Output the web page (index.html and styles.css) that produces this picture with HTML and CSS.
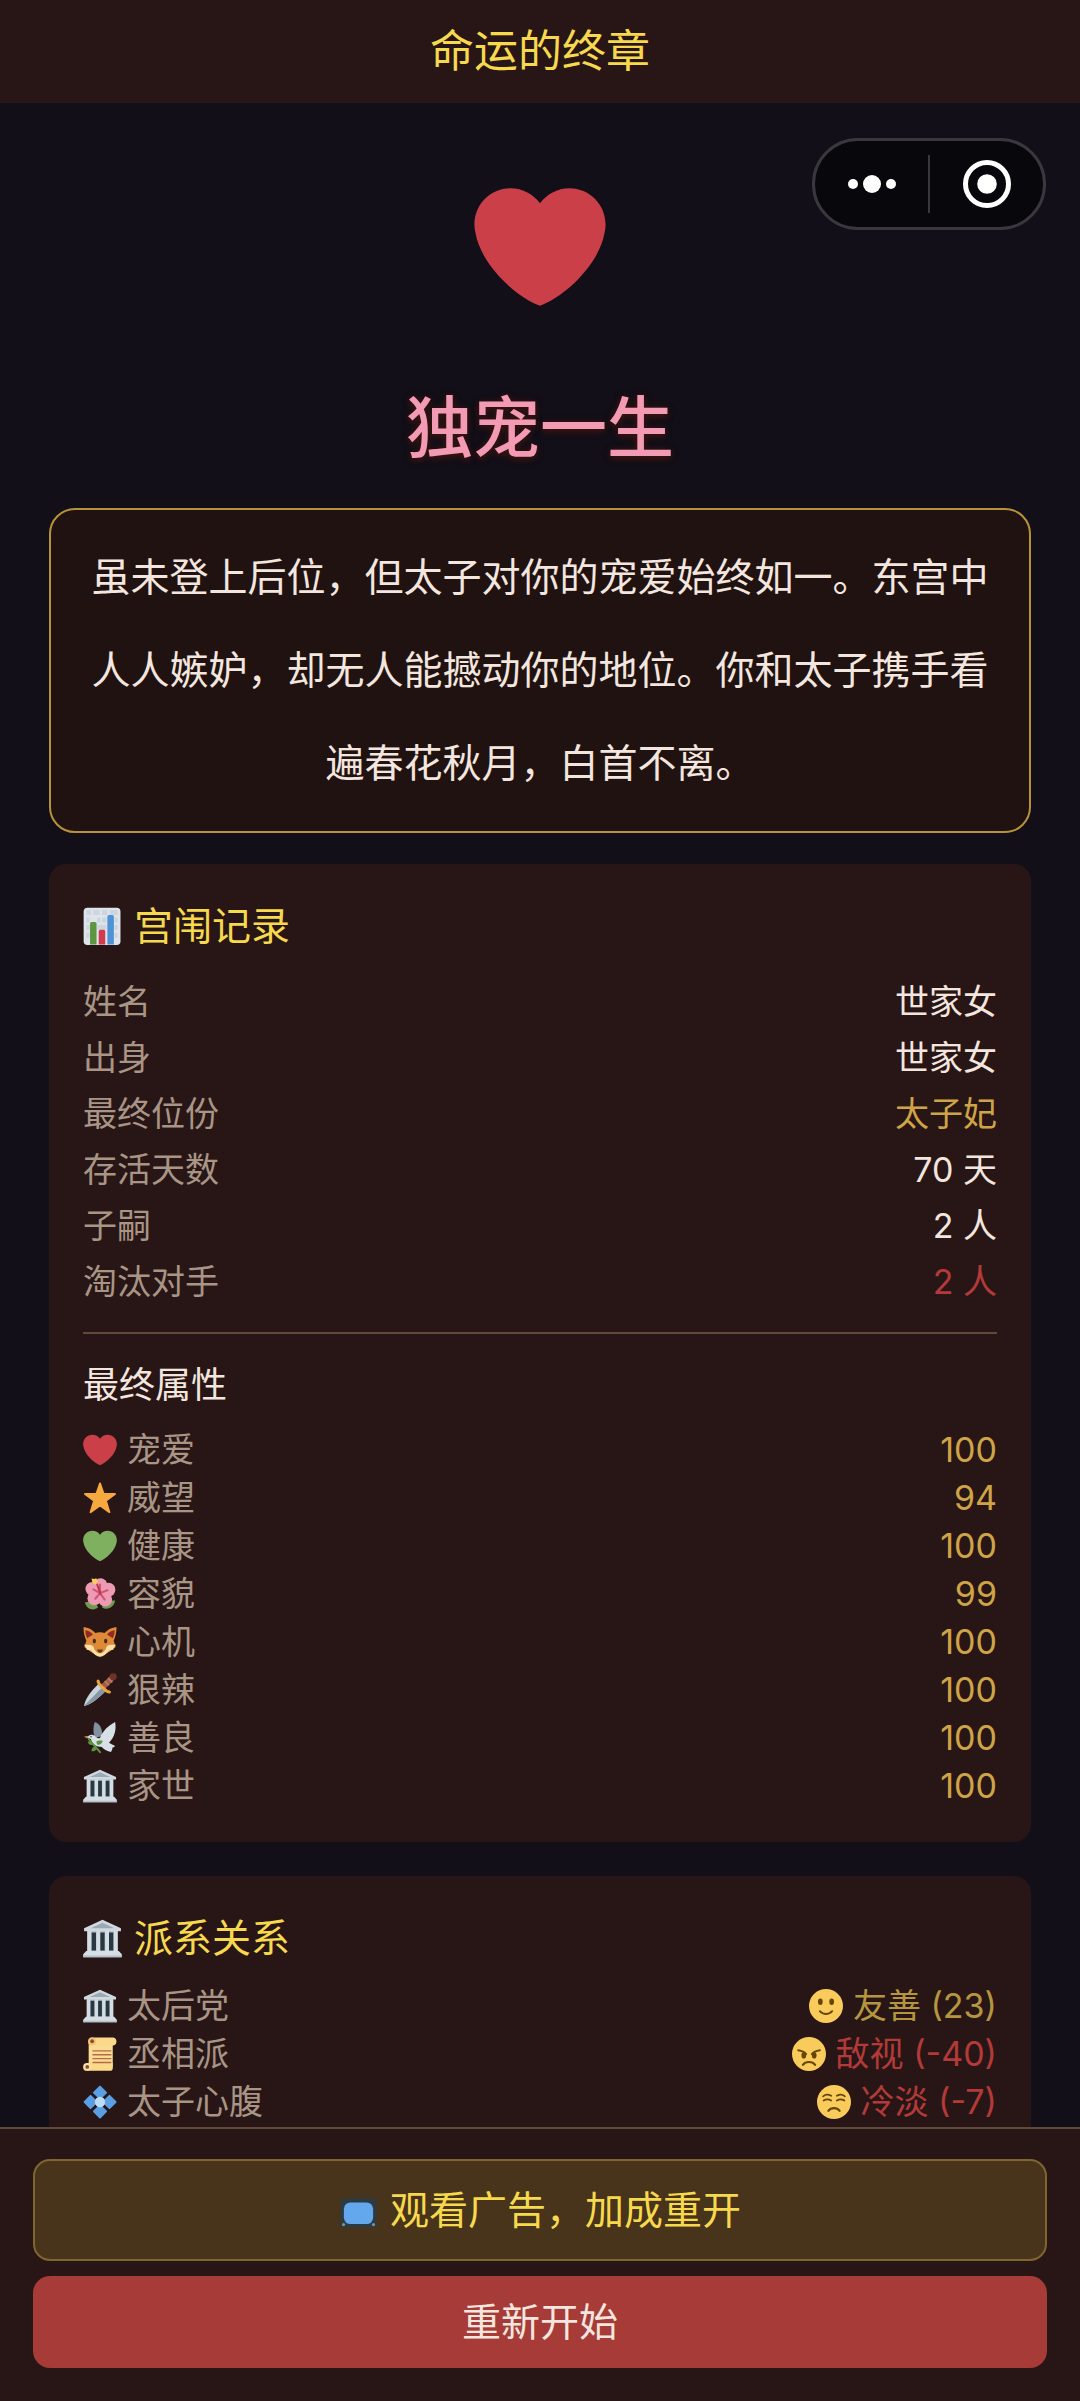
FILE: index.html
```html
<!DOCTYPE html>
<html lang="zh-CN">
<head>
<meta charset="utf-8">
<meta name="viewport" content="width=device-width, initial-scale=1">
<title>命运的终章</title>
<link rel="stylesheet" href="styles.css">
</head>
<body>
<svg class="sprite" aria-hidden="true">
  <symbol id="i-heart" viewBox="0 0 36 36"><path fill="currentColor" d="M35.885 11.833c0-5.45-4.418-9.868-9.867-9.868-3.308 0-6.227 1.633-8.018 4.129-1.791-2.496-4.71-4.129-8.017-4.129-5.45 0-9.868 4.417-9.868 9.868 0 .772.098 1.52.266 2.241C1.751 22.587 11.216 31.568 18 34.034c6.783-2.466 16.249-11.447 17.617-19.959.17-.721.268-1.469.268-2.242z"/></symbol>
  <symbol id="i-star" viewBox="0 0 36 36"><path fill="#f5a93f" stroke="#f5a93f" stroke-width="2" stroke-linejoin="round" d="M18 2.500 21.800 13.500 33.900 13.700 24.300 21 28 33 18 26 8 33 11.700 21 2.100 13.700 14.200 13.500z"/></symbol>
  <symbol id="i-chart" viewBox="0 0 36 36">
    <rect x=".6" y=".6" width="34" height="34.400" rx="3.500" fill="#dfe4ea"/>
    <path stroke="#cdd6df" stroke-width="4.600" d="M3 5h4.500M9.500 5h6M17.500 5h5M24.500 5h7.500M3 12h3M13 12h3M17.500 12h4M29 12h3M3 19h3M13 19h8.500M29 19h3M3 26h3M29 26h3"/>
    <path fill="#5c9740" d="M6.500 34.500V15.300q0-1.500 1.500-1.500h3q1.500 0 1.500 1.500v19.200z"/>
    <path fill="#d23a4e" d="M14.500 34.500V22.500q0-1.500 1.500-1.500h3q1.500 0 1.500 1.500v12z"/>
    <path fill="#4f93d6" d="M22.500 34.500V8.800q0-1.500 1.500-1.500h3q1.500 0 1.500 1.500v25.700z"/>
  </symbol>
  <symbol id="i-flower" viewBox="0 0 36 36">
    <path fill="#6f9c50" d="M2 27c5-2 12 0 14 5-4 4-12 3-14-5zM20 32c2-5 8-8 14-7-1 7-8 11-14 7z"/>
    <g fill="#ee9ab4"><circle cx="18.500" cy="8.500" r="7.300"/><circle cx="9.800" cy="12.500" r="7.300"/><circle cx="27" cy="13.500" r="7.300"/><circle cx="12" cy="22.500" r="7.300"/><circle cx="23.500" cy="24" r="7.300"/><circle cx="18" cy="17" r="6"/></g>
    <path stroke="#cf5776" stroke-width="2.200" stroke-linecap="round" d="M18 17V8M18 17l-7-4M18 17l8-3M18 17l-5 6M18 17l5 7"/>
    <path stroke="#c22f45" stroke-width="2" stroke-linecap="round" d="M18.500 18 15 8"/>
    <path fill="#f7cf57" d="M9 1.500l3 .5 2-.8 2 3.800-3 3-3-2z"/>
  </symbol>
  <symbol id="i-fox" viewBox="0 0 36 36">
    <path fill="#e08a38" d="M.5 2.500C5 2.500 10 5 13 8.500c3-1 7-1 10 0C26 5 31 2.500 35.500 2.500c0 5-1 10-3 14l2 7-7 5-9.500 5-9.500-5-7-5 2-7C1.500 12.500.5 7.500.5 2.500z"/>
    <path fill="#8e2b23" d="M2.500 5.500C6 6 9 8 10.500 10L4.500 14C3 11.500 2.500 9 2.500 5.500zM33.500 5.500C30 6 27 8 25.500 10l6 4c1.500-2.500 2-5 2-8.500z"/>
    <path fill="#fbe0a5" d="M1 21c4 0 8-1 10 2 1 3 3 7 7 7s6-4 7-7c2-3 6-2 10-2l-3 4 .5 1-5 1c-3 4-6 6.500-9.500 6.500s-6.500-2.500-9.500-6.500l-5-1 .5-1z"/>
    <ellipse cx="12" cy="17" rx="1.700" ry="2.500" fill="#3d2c20"/><ellipse cx="24" cy="17" rx="1.700" ry="2.500" fill="#3d2c20"/>
    <path fill="#5a3a24" d="M15 26h6c0 2-1.500 3.500-3 3.500s-3-1.500-3-3.500z"/>
  </symbol>
  <symbol id="i-dagger" viewBox="0 0 36 36">
    <path fill="#c9d3dc" d="M1 35C2.500 27 8 20 16.500 11.500l7.500 7.500C16 27 9 33 1 35z"/>
    <path fill="#8798a5" d="M1 35 20.500 15l3.500 4C16 27 9 33 1 35z"/>
    <path stroke="#a05c4a" stroke-width="6" d="M20 16 31 5"/>
    <path stroke="#c97b63" stroke-width="1.500" d="M23 8.500l4.500 4.500M26.500 5.500 31 10"/>
    <path fill="none" stroke="#eda33d" stroke-width="3.200" stroke-linecap="round" d="M16 8.500c0 3 3 5 5 7s4 4.500 7 4.500"/>
    <circle cx="32" cy="4" r="3.700" fill="#6e3327"/>
  </symbol>
  <symbol id="i-dove" viewBox="0 0 36 36">
    <path fill="#8291a0" d="M12.500 1c5 2 8 6 8 15l-8 2c-2-6-2-12 0-17z"/>
    <path fill="#d8e0e7" d="M34 1c1.500 8-.5 16-6.500 22l6.500 3.500c-1 1.500-2 1.700-3 1.700.5 1.500-.5 3-1.500 4.500-5-1-8-3.500-10-5.500-6 0-10-3-11-8l-4-2C6 14.500 10 13.500 12.500 16c1.500 1.500 3.500 3 5.500 2 3-8 9-13 16-17z"/>
    <path fill="#e0a23d" d="M1 16.500l5-.5-1.500 2.500z"/>
    <circle cx="8.500" cy="16.700" r=".8" fill="#29323a"/>
    <path fill="none" stroke="#5e9440" stroke-width="2" stroke-linecap="round" d="M6 19c2 4 7 7 12 14"/>
    <path fill="#5e9440" d="M5 22c3-1 5 0 6 3-3 1-5 0-6-3zM14 22c3-2 5-1 7-1-1 3-3 5-6 4zM12 27c-2 1-3 2-3 5 3 0 5-1 6-3z"/>
  </symbol>
  <symbol id="i-palace" viewBox="0 0 36 36">
    <path fill="#b4c0ca" d="M4 10h28v21H4z"/>
    <path fill="#d5dde4" d="M4 11h3.500v19H4zM12.500 11H16v19h-3.500zM20.500 11H24v19h-3.500zM28.500 11H32v19h-3.500z"/>
    <path fill="#283741" d="M8 12.500h4V29H8zM16 12.500h4V29h-4zM24 12.500h4V29h-4z"/>
    <path fill="#d0d9e0" d="M18 .8 35 8.500v2.700H1V8.500z"/>
    <path fill="#9ba9b5" d="M18 3.500 29 8.500H7z"/>
    <path fill="#d6dee4" d="M3 29.500h30l2.800 3v2.700H.2v-2.700z"/>
    <path fill="#b4c0ca" d="M.2 33.700h35.600v1.500H.2z"/>
  </symbol>
  <symbol id="i-scroll" viewBox="0 0 36 36">
    <path fill="#fadc92" d="M6 4h25.500v28H6z"/>
    <path fill="#fbd98a" d="M8 .5h24a4 4.300 0 0 1 0 8.500H10z"/>
    <circle cx="9.500" cy="4.700" r="4.200" fill="#f3c377"/><circle cx="9.700" cy="4.500" r="2" fill="#8a4b38"/>
    <path fill="#fbd98a" d="M4 27.500h27.500V33q0 2.700-3 2.700H4z"/>
    <circle cx="4.200" cy="31.700" r="4.100" fill="#fbe0a0"/><circle cx="4.500" cy="31.700" r="2" fill="#8a4b38"/>
    <path stroke="#b56a4c" stroke-width="1.500" d="M10 14.700h20M10 18.800h20M10 22.900h20M10 27h20"/>
  </symbol>
  <symbol id="i-diamond" viewBox="0 0 36 36">
    <g fill="#5a9fe3" stroke="#5a9fe3" stroke-width="2" stroke-linejoin="round"><path d="M18 1.700 24.500 8 18 14.500 11.500 8z"/><path d="M18 21.500 24.500 28 18 34.500 11.500 28z"/><path d="M8 11.500 14.500 18 8 24.500 1.700 18z"/><path d="M28 11.500 34.500 18 28 24.500 21.500 18z"/></g>
    <circle cx="18" cy="18" r="5.500" fill="#bddcf8"/>
  </symbol>
  <symbol id="i-smile" viewBox="0 0 36 36">
    <circle cx="18" cy="18" r="18" fill="#f8cb5b"/>
    <ellipse cx="12" cy="13.500" rx="2.500" ry="3.500" fill="#664500"/><ellipse cx="24" cy="13.500" rx="2.500" ry="3.500" fill="#664500"/>
    <path fill="none" stroke="#664500" stroke-width="2" stroke-linecap="round" d="M11.500 23.500c3.500 4 9.500 4 13 0"/>
  </symbol>
  <symbol id="i-angry" viewBox="0 0 36 36">
    <circle cx="18" cy="18" r="18" fill="#f8cb5b"/>
    <ellipse cx="12.500" cy="19.500" rx="2.500" ry="3.300" fill="#664500"/><ellipse cx="23.500" cy="19.500" rx="2.500" ry="3.300" fill="#664500"/>
    <path fill="none" stroke="#664500" stroke-width="2" stroke-linecap="round" d="M6.500 14c3 .5 6.500 1.500 8.500 4M29.500 14c-3 .5-6.500 1.500-8.500 4"/>
    <path fill="none" stroke="#664500" stroke-width="2.200" stroke-linecap="round" d="M11.500 29.500c3-4 10-4 13 0"/>
  </symbol>
  <symbol id="i-unamused" viewBox="0 0 36 36">
    <circle cx="18" cy="18" r="18" fill="#f8cb5b"/>
    <path fill="none" stroke="#664500" stroke-width="1.800" stroke-linecap="round" d="M6.500 12c2.500-2.200 5.500-2.200 8.500-.5M21 11.500c3-1.700 6-1.700 8.500.5M7 16.500c2.500-1.500 5.500-1.500 8 0M21 16.500c2.500-1.500 5.500-1.500 8 0"/>
    <path fill="none" stroke="#664500" stroke-width="2.200" stroke-linecap="round" d="M12 27.500c3-4 9-4 12 0"/>
  </symbol>
  <symbol id="i-tv" viewBox="0 0 36 36">
    <path stroke="#3a3a33" stroke-width="1.200" d="M18 7.500 12 .5M18 7.500l7-7"/>
    <rect x="1.500" y="7" width="33" height="26.500" rx="2" fill="#2c3a42"/>
    <rect x="4.500" y="10.500" width="27" height="20" rx="6" fill="#63a8ec"/>
    <circle cx="4.200" cy="31" r="1.500" fill="#7f8d96"/><circle cx="31.800" cy="31" r="1.500" fill="#7f8d96"/>
  </symbol>
</svg>

<div class="app">
  <header class="topbar">命运的终章</header>

  <div class="capsule">
    <button type="button" aria-label="更多"><svg viewBox="0 0 60 60"><g fill="#fff"><circle cx="11" cy="30" r="5"/><circle cx="30" cy="30" r="9"/><circle cx="49" cy="30" r="5"/></g></svg></button>
    <button type="button" aria-label="关闭"><svg viewBox="0 0 60 60"><circle cx="30" cy="30" r="21.500" fill="none" stroke="#fff" stroke-width="5"/><circle cx="30" cy="30" r="9.800" fill="#fff"/></svg></button>
  </div>

  <main class="content">
    <svg class="hero red-heart" aria-hidden="true"><use href="#i-heart"/></svg>
    <h1>独宠一生</h1>
    <p class="story">虽未登上后位，但太子对你的宠爱始终如一。东宫中人人嫉妒，却无人能撼动你的地位。你和太子携手看遍春花秋月，白首不离。</p>

    <section class="card">
      <h2><svg class="icon"><use href="#i-chart"/></svg>宫闱记录</h2>
      <dl class="record">
        <div><dt>姓名</dt><dd>世家女</dd></div>
        <div><dt>出身</dt><dd>世家女</dd></div>
        <div><dt>最终位份</dt><dd class="gold">太子妃</dd></div>
        <div><dt>存活天数</dt><dd>70 天</dd></div>
        <div><dt>子嗣</dt><dd>2 人</dd></div>
        <div><dt>淘汰对手</dt><dd class="red">2 人</dd></div>
      </dl>
      <h3>最终属性</h3>
      <dl class="stats">
        <div><dt><svg class="icon red-heart"><use href="#i-heart"/></svg>宠爱</dt><dd class="gold">100</dd></div>
        <div><dt><svg class="icon"><use href="#i-star"/></svg>威望</dt><dd class="gold">94</dd></div>
        <div><dt><svg class="icon green-heart"><use href="#i-heart"/></svg>健康</dt><dd class="gold">100</dd></div>
        <div><dt><svg class="icon"><use href="#i-flower"/></svg>容貌</dt><dd class="gold">99</dd></div>
        <div><dt><svg class="icon"><use href="#i-fox"/></svg>心机</dt><dd class="gold">100</dd></div>
        <div><dt><svg class="icon"><use href="#i-dagger"/></svg>狠辣</dt><dd class="gold">100</dd></div>
        <div><dt><svg class="icon"><use href="#i-dove"/></svg>善良</dt><dd class="gold">100</dd></div>
        <div><dt><svg class="icon"><use href="#i-palace"/></svg>家世</dt><dd class="gold">100</dd></div>
      </dl>
    </section>

    <section class="card">
      <h2><svg class="icon"><use href="#i-palace"/></svg>派系关系</h2>
      <dl class="stats">
        <div><dt><svg class="icon"><use href="#i-palace"/></svg>太后党</dt><dd class="friendly"><svg class="icon"><use href="#i-smile"/></svg>友善 (23)</dd></div>
        <div><dt><svg class="icon"><use href="#i-scroll"/></svg>丞相派</dt><dd class="red"><svg class="icon"><use href="#i-angry"/></svg>敌视 (-40)</dd></div>
        <div><dt><svg class="icon"><use href="#i-diamond"/></svg>太子心腹</dt><dd class="red"><svg class="icon"><use href="#i-unamused"/></svg>冷淡 (-7)</dd></div>
      </dl>
    </section>
  </main>

  <footer class="actions">
    <button type="button" class="btn btn-ad"><svg class="icon"><use href="#i-tv"/></svg>观看广告，加成重开</button>
    <button type="button" class="btn btn-restart">重新开始</button>
  </footer>
</div>
</body>
</html>
```
FILE: styles.css
```css
* {
  box-sizing: border-box;
}

body,
h1,
h2,
h3,
p,
dl,
dd {
  margin: 0;
}

body {
  background: #120f18;
  color: #f3e6df;
  font-family: Inter, "Noto Sans CJK SC", sans-serif;
  font-size: 34px;
}

button {
  font: inherit;
  color: inherit;
  cursor: pointer;
}

.sprite {
  position: absolute;
  width: 0;
  height: 0;
}

.app {
  display: flex;
  flex-direction: column;
  height: 100vh;
}

.topbar {
  flex: none;
  padding: 19px 0 20px;
  background: #281616;
  color: #f7d94e;
  font-size: 44px;
  line-height: 64px;
  text-align: center;
}

/* Floating host menu, drawn over the page */
.capsule {
  position: fixed;
  top: 138px;
  right: 34px;
  display: flex;
  align-items: center;
  width: 234px;
  height: 92px;
  border: 3px solid #3a383e;
  border-radius: 46px;
  background: #08070b;
}

.capsule button {
  flex: 1;
  display: flex;
  align-items: center;
  justify-content: center;
  height: 58px;
  padding: 0;
  border: 0;
  background: none;
}

.capsule button + button {
  border-left: 2px solid #3a383e;
}

.capsule svg {
  width: 60px;
  height: 60px;
}

.content {
  flex: 1;
  min-height: 0;
  overflow-y: auto;
  scrollbar-width: none;
  padding: 78px 49px 34px;
}

.hero {
  display: block;
  width: 132px;
  height: 132px;
  margin: 0 auto 68px;
}

.red-heart {
  color: #cb3f49;
}

.green-heart {
  color: #7fb05f;
}

h1 {
  color: #f39bb5;
  font-size: 67px;
  font-weight: 500;
  line-height: 94px;
  text-align: center;
  text-shadow: 0 3px 6px #3a1410, 0 0 6px #3a1410;
}

.story {
  margin: 33px 0 31px;
  padding: 20px 32px 22px;
  border: 2px solid #b8923a;
  border-radius: 26px;
  background: #201211;
  font-size: 39px;
  line-height: 93px;
  text-align: center;
}

.card {
  margin-bottom: 34px;
  padding: 34px 34px 32px;
  border-radius: 17px;
  background: #281616;
}

h2 {
  display: flex;
  align-items: center;
  gap: 12px;
  color: #f7d94e;
  font-size: 39px;
  font-weight: 400;
  line-height: 56px;
}

h3 {
  padding-top: 26px;
  border-top: 2px solid #60493a;
  font-size: 36px;
  font-weight: 400;
  line-height: 50px;
}

.icon {
  flex: none;
  width: 1em;
  height: 1em;
}

.record {
  margin: 20px 0 22px;
  line-height: 56px;
}

.stats {
  margin-top: 16px;
  line-height: 48px;
}

.record div,
.stats div {
  display: flex;
  justify-content: space-between;
}

dt,
dd {
  display: flex;
  align-items: center;
  gap: 10px;
}

dt {
  color: #a89585;
}

.gold {
  color: #cfa446;
}

.friendly {
  color: #b5963f;
}

.red {
  color: #b33a38;
}

.actions {
  flex: none;
  display: flex;
  flex-direction: column;
  gap: 15px;
  padding: 30px 33px 33px;
  border-top: 2px solid #60493a;
  background: #281616;
}

.btn {
  display: flex;
  align-items: center;
  justify-content: center;
  gap: 12px;
  padding: 18px;
  border: 0;
  border-radius: 17px;
  font-size: 39px;
  line-height: 56px;
}

.btn-ad {
  padding: 21px;
  border: 2px solid #80652f;
  background: #48341a;
  color: #f7d94e;
}

.btn-restart {
  background: #a63b38;
}
```
